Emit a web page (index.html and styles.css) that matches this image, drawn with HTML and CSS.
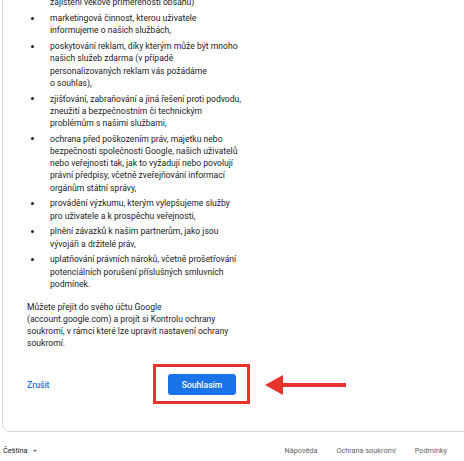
FILE: index.html
```html
<!DOCTYPE html>
<html lang="cs">
<head>
  <meta charset="UTF-8">
  <meta name="viewport" content="width=device-width, initial-scale=1.0">
  <title>Ochrana soukromí a smluvní podmínky</title>
  <link rel="stylesheet" href="styles.css">
</head>
<body>
  <div class="card">
    <div class="content">
      <ul class="uses">
        <li class="cont">zajištění věkové přiměřenosti obsahu)</li>
        <li>marketingová činnost, kterou uživatele informujeme o&nbsp;našich službách,</li>
        <li>poskytování reklam, díky kterým může být mnoho našich služeb zdarma (v&nbsp;případě personalizovaných reklam vás požádáme o&nbsp;souhlas),</li>
        <li>zjišťování, zabraňování a&nbsp;jiná řešení proti podvodu, zneužití a&nbsp;bezpečnostním či technickým problémům s&nbsp;našimi službami,</li>
        <li>ochrana před poškozením práv, majetku nebo bezpečnosti společnosti Google, našich uživatelů nebo veřejnosti tak, jak to vyžadují nebo povolují právní předpisy, včetně zveřejňování informací orgánům státní správy,</li>
        <li>provádění výzkumu, kterým vylepšujeme služby pro uživatele a&nbsp;k&nbsp;prospěchu veřejnosti,</li>
        <li>plnění závazků k&nbsp;našim partnerům, jako jsou vývojáři a&nbsp;držitelé práv,</li>
        <li>uplatňování právních nároků, včetně prošetřování potenciálních porušení příslušných smluvních podmínek.</li>
      </ul>
      <p class="note">Můžete přejít do svého účtu Google (account.google.com) a&nbsp;projít si Kontrolu ochrany soukromí, v&nbsp;rámci které lze upravit nastavení ochrany soukromí.</p>

      <div class="actions">
        <a class="cancel" href="#">Zrušit</a>
        <div class="agree-wrap">
          <button class="agree">Souhlasím</button>
          <span class="highlight"></span>
          <svg class="arrow" width="82" height="20" viewBox="0 0 82 20">
            <polygon points="0,10 18,0 18,20" fill="#e8322e"/>
            <rect x="17" y="8" width="64" height="4" fill="#e8322e"/>
          </svg>
        </div>
      </div>
    </div>
  </div>

  <div class="footer">
    <div class="lang">Čeština <span class="caret"></span></div>
    <div class="links">
      <a href="#">Nápověda</a>
      <a href="#">Ochrana soukromí</a>
      <a href="#">Podmínky</a>
    </div>
  </div>
</body>
</html>
```

FILE: styles.css
```css
body {
  margin: 0;
  font-family: Roboto, "Liberation Sans", Arial, sans-serif;
  color: #202124;
  background-color: white;
}
.card {
  width: 445px;
  margin: -3.6px 0 0 2px;
  border: 1px solid #dadce0;
  border-top: none;
  border-radius: 0 0 8px 8px;
  padding: 0 0 36px 24px;
  box-sizing: content-box;
}
.content {
  width: 215px;
  font-size: 8.6px;
}
.uses {
  list-style: none;
  margin: 0 0 10.5px;
  padding: 0;
  line-height: 12.2px;
}
.uses li {
  display: grid;
  grid-template-columns: 23px 1fr;
}
.uses li + li {
  margin-top: 3.6px;
}
.uses li::before {
  content: "";
  width: 3px;
  height: 3px;
  margin: 4.6px 0 0 4px;
  border-radius: 50%;
  background-color: #202124;
}
.uses li.cont::before {
  visibility: hidden;
}
.note {
  margin: 0;
  width: 209px;
  line-height: 12px;
}
.actions {
  display: flex;
  justify-content: space-between;
  align-items: center;
  width: 209px;
  margin-top: 25.6px;
}
.cancel {
  color: #1a73e8;
  font-weight: 500;
  font-size: 8.6px;
  text-decoration: none;
}
.agree-wrap {
  position: relative;
}
.agree {
  display: block;
  width: 68px;
  height: 21px;
  border: none;
  border-radius: 3px;
  background-color: #1a73e8;
  color: white;
  font-family: inherit;
  font-size: 8.6px;
  font-weight: 500;
  padding: 0;
}
.highlight {
  position: absolute;
  top: -10px;
  left: -15px;
  right: -14px;
  bottom: -9px;
  border: 3.5px solid #e8322e;
}
.arrow {
  position: absolute;
  left: 97px;
  top: 1px;
}
.footer {
  display: flex;
  justify-content: space-between;
  align-items: center;
  margin-top: 14px;
  padding: 0 17px 0 3px;
  font-size: 7.3px;
  line-height: 10px;
}
.lang {
  display: flex;
  align-items: center;
  gap: 5px;
}
.caret {
  width: 0;
  height: 0;
  border-left: 2.5px solid transparent;
  border-right: 2.5px solid transparent;
  border-top: 2.5px solid #5f6368;
}
.links {
  display: flex;
  gap: 19px;
}
.links a {
  color: #5f6368;
  text-decoration: none;
}
```
